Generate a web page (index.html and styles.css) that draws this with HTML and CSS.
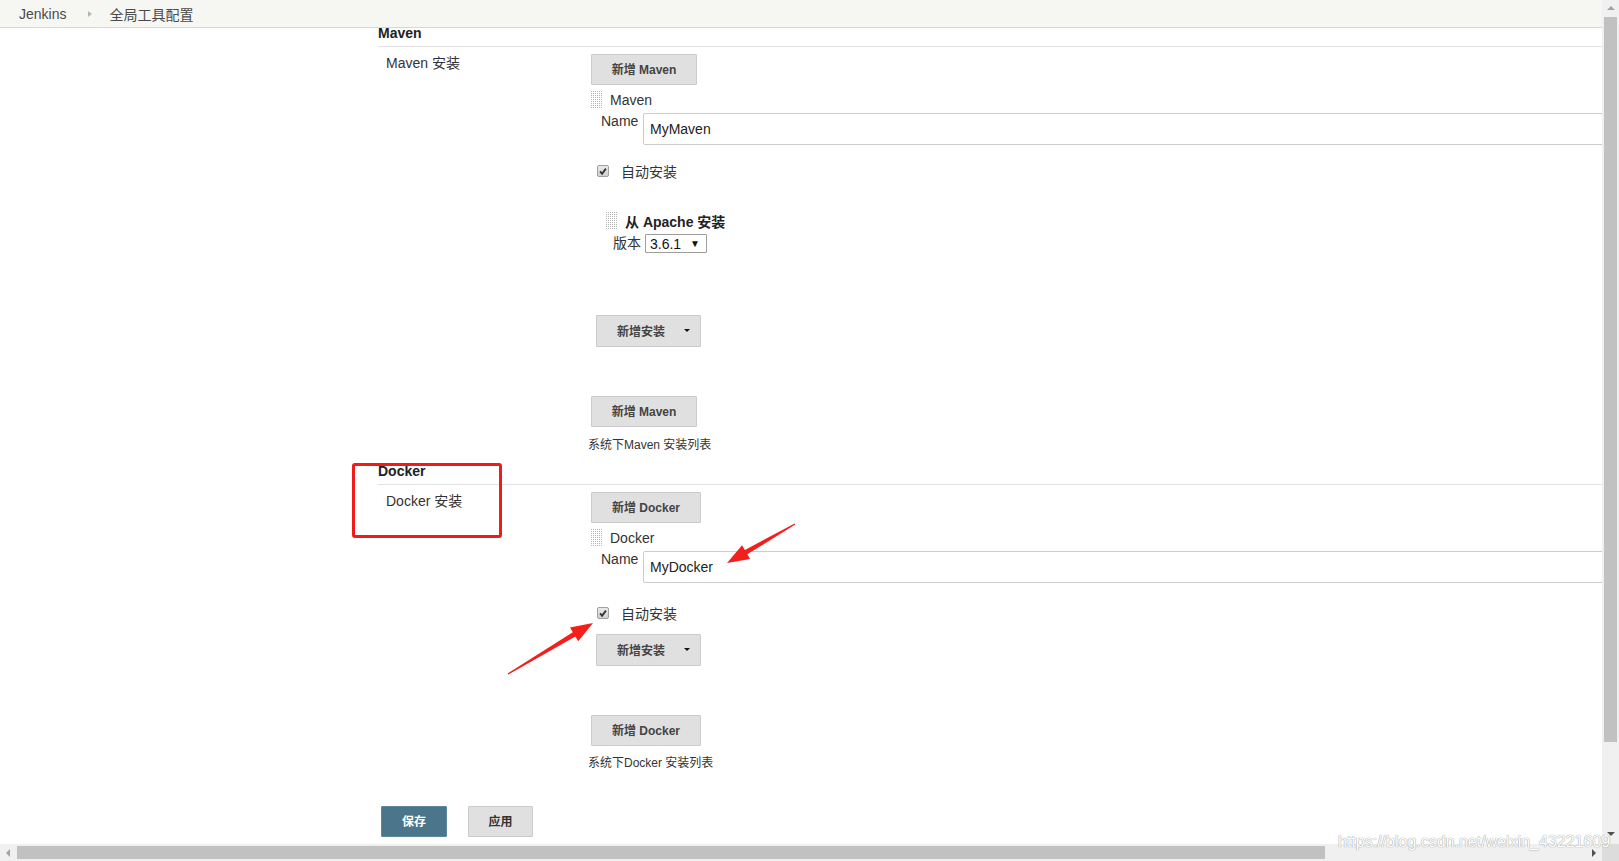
FILE: index.html
```html
<!DOCTYPE html>
<html lang="zh-CN">
<head>
    <meta charset="UTF-8">
    <title>全局工具配置 [Jenkins]</title>
    <link rel="stylesheet" href="styles.css">
</head>
<body>
    <div class="breadcrumb">
        <span class="crumb">Jenkins</span>
        <span class="crumb-sep"></span>
        <span class="crumb">全局工具配置</span>
    </div>

    <div class="main">
        <!-- Maven -->
        <div class="section">
            <div class="section-title">Maven</div>
            <div class="tool-row">
                <div class="tool-label">Maven 安装</div>
                <div class="tool-body">
                    <button class="btn btn-add">新增 Maven</button>
                    <div class="repeat-head"><span class="handle"></span><span>Maven</span></div>
                    <div class="field">
                        <label class="field-label">Name</label>
                        <input class="text-input" type="text" value="MyMaven">
                    </div>
                    <div class="check-row check-maven">
                        <span class="checkbox">
                            <svg width="11" height="11" viewBox="0 0 11 11"><path d="M2.3 5.3 L4.5 8 L8.7 2.3" fill="none" stroke="#333" stroke-width="2"/></svg>
                        </span>
                        <span>自动安装</span>
                    </div>
                    <div class="installer">
                        <div class="installer-head"><span class="handle"></span><b>从 Apache 安装</b></div>
                        <div class="version-row">
                            <span class="version-label">版本</span>
                            <div class="select">3.6.1<span class="select-caret">▼</span></div>
                        </div>
                    </div>
                    <button class="btn btn-menu btn-menu-maven">新增安装<span class="menu-caret"></span></button>
                    <button class="btn btn-add btn-add-bottom">新增 Maven</button>
                    <div class="note">系统下Maven 安装列表</div>
                </div>
            </div>
        </div>

        <!-- Docker -->
        <div class="section section-docker">
            <div class="section-title">Docker</div>
            <div class="tool-row">
                <div class="tool-label">Docker 安装</div>
                <div class="tool-body">
                    <button class="btn btn-add btn-docker">新增 Docker</button>
                    <div class="repeat-head"><span class="handle"></span><span>Docker</span></div>
                    <div class="field">
                        <label class="field-label">Name</label>
                        <input class="text-input" type="text" value="MyDocker">
                    </div>
                    <div class="check-row check-docker">
                        <span class="checkbox">
                            <svg width="11" height="11" viewBox="0 0 11 11"><path d="M2.3 5.3 L4.5 8 L8.7 2.3" fill="none" stroke="#333" stroke-width="2"/></svg>
                        </span>
                        <span>自动安装</span>
                    </div>
                    <button class="btn btn-menu btn-menu-docker">新增安装<span class="menu-caret"></span></button>
                    <button class="btn btn-add btn-docker btn-add-bottom">新增 Docker</button>
                    <div class="note note-docker">系统下Docker 安装列表</div>
                </div>
            </div>
        </div>

        <div class="form-actions">
            <button class="btn btn-save">保存</button>
            <button class="btn btn-apply">应用</button>
        </div>
    </div>

    <!-- annotations drawn over the screenshot -->
    <div class="mark-box"></div>
    <svg class="mark-arrows" width="1619" height="861" viewBox="0 0 1619 861">
        <polygon fill="#f41e1a" points="795.3,524.6 747.3,554.3 750.1,559.0 727,563 742.1,545.2 744.9,549.9 794.7,523.4"/>
        <polygon fill="#f41e1a" points="508.4,674.6 575.4,636.4 578.2,641.2 593,623 570.0,627.4 572.8,632.2 507.6,673.4"/>
    </svg>
    <div class="watermark">https://blog.csdn.net/weixin_43221609</div>

    <!-- window scrollbars -->
    <div class="vscroll">
        <span class="arrow-up"></span>
        <div class="vthumb"></div>
        <span class="arrow-down"></span>
    </div>
    <div class="hscroll">
        <span class="arrow-left"></span>
        <div class="hthumb"></div>
        <span class="arrow-right"></span>
    </div>
    <div class="scroll-corner"></div>
</body>
</html>
```

FILE: styles.css
```css
body {
    margin: 0;
    width: 1619px;
    height: 861px;
    overflow: hidden;
    position: relative;
    font-family: "Liberation Sans", Arial, "Noto Sans CJK SC", sans-serif;
    font-size: 14px;
    color: #333;
    background: #fff;
}
.breadcrumb {
    height: 27px;
    display: flex;
    align-items: center;
    padding-left: 19px;
    background-color: #f6f7f2;
    border-bottom: 1px solid #d6d8d2;
    color: #4a4a4a;
}
.crumb-sep {
    width: 0;
    height: 0;
    margin: 0 17px 0 22px;
    border-top: 3px solid transparent;
    border-bottom: 3px solid transparent;
    border-left: 4px solid #b5b5b5;
}
.main {
    padding-left: 378px;
}
.section-title {
    height: 18px;
    line-height: 10px;
    font-weight: bold;
    color: #222;
    border-bottom: 1px solid #e2e2e2;
}
.section-docker {
    margin-top: 14px;
}
.tool-row {
    display: grid;
    grid-template-columns: 213px 1fr;
}
.tool-label {
    padding: 8px 0 0 8px;
    line-height: 16px;
}
.tool-body {
    display: flex;
    flex-direction: column;
    align-items: flex-start;
}
.btn {
    box-sizing: border-box;
    height: 31px;
    padding: 0 0 2px;
    font-family: inherit;
    font-size: 12px;
    font-weight: bold;
    color: #444;
    background-color: #e0e0e0;
    border: 1px solid #cbcbcb;
    border-radius: 1px;
}
.btn-add {
    width: 106px;
    margin-top: 7px;
}
.btn-docker {
    width: 110px;
}
.btn-add-bottom {
    margin-top: 49px;
}
.repeat-head {
    display: flex;
    align-items: center;
    height: 17px;
    margin-top: 6px;
    gap: 7px;
}
.handle {
    display: inline-block;
    width: 12px;
    height: 17px;
    background:
        linear-gradient(90deg, transparent 1px, #fff 1px) 0 0 / 2px 2px,
        linear-gradient(#b4b4b4 1px, #fff 1px) 0 0 / 2px 2px;
}
.field {
    display: flex;
    align-self: stretch;
    margin-top: 5px;
    padding-left: 10px;
}
.field-label {
    width: 42px;
    line-height: 16px;
}
.text-input {
    flex: 1;
    box-sizing: border-box;
    height: 32px;
    margin: 0;
    padding: 0 6px;
    font-family: inherit;
    font-size: 14px;
    color: #222;
    border: 1px solid #ccc;
    border-radius: 2px;
}
.check-row {
    display: flex;
    align-items: flex-start;
    padding-left: 6px;
    line-height: 14px;
}
.check-maven {
    margin-top: 20px;
}
.check-docker {
    margin-top: 24px;
}
.checkbox {
    box-sizing: border-box;
    width: 12px;
    height: 12px;
    margin-right: 12px;
    display: flex;
    border: 1px solid #a0a0a0;
    border-radius: 2px;
    background: linear-gradient(#eaeaea, #d0d0d0);
}
.installer {
    margin: 33px 0 0 15px;
}
.installer-head {
    display: flex;
    align-items: center;
    gap: 7px;
    height: 17px;
    color: #222;
}
.version-row {
    display: flex;
    align-items: center;
    margin-top: 5px;
    padding-left: 7px;
}
.version-label {
    width: 32px;
    line-height: 19px;
}
.select {
    box-sizing: border-box;
    width: 62px;
    height: 19px;
    padding-left: 4px;
    display: flex;
    align-items: center;
    justify-content: space-between;
    border: 1px solid #9d9d9d;
    border-radius: 1px;
    color: #111;
}
.select-caret {
    font-size: 10px;
    margin-right: 6px;
}
.btn-menu {
    width: 105px;
    height: 32px;
    margin-left: 5px;
    padding-left: 20px;
    display: flex;
    align-items: center;
}
.btn-menu-maven {
    margin-top: 62px;
}
.btn-menu-docker {
    margin-top: 13px;
}
.menu-caret {
    width: 0;
    height: 0;
    margin-left: 19px;
    border-left: 3px solid transparent;
    border-right: 3px solid transparent;
    border-top: 3px solid #111;
}
.note {
    margin: 11px 0 0 -3px;
    font-size: 12px;
    line-height: 14px;
}
.note-docker {
    margin-top: 10px;
}
.form-actions {
    display: flex;
    gap: 21px;
    margin: 36px 0 0 3px;
}
.btn-save {
    width: 66px;
    color: #fff;
    background-color: #4b758b;
    border-color: #5b87a0;
}
.btn-apply {
    width: 65px;
    color: #333;
}
.mark-box {
    position: absolute;
    left: 352px;
    top: 463px;
    width: 144px;
    height: 69px;
    border: 3px solid #f11c19;
    border-radius: 3px;
}
.mark-arrows {
    position: absolute;
    left: 0;
    top: 0;
}
.watermark {
    position: absolute;
    left: 1338px;
    top: 832px;
    font-size: 16px;
    line-height: 20px;
    color: #fff;
    text-shadow: 0 0 1px #9a9a9a, 0 0 1px #9a9a9a;
    z-index: 2;
}
.vscroll {
    position: absolute;
    left: 1602px;
    top: 0;
    width: 17px;
    height: 844px;
    background-color: #f0f0f0;
}
.vthumb {
    position: absolute;
    left: 2px;
    top: 17px;
    width: 13px;
    height: 725px;
    background-color: #c1c1c1;
}
.arrow-up,
.arrow-down {
    position: absolute;
    left: 5px;
    width: 0;
    height: 0;
    border-left: 4px solid transparent;
    border-right: 4px solid transparent;
}
.arrow-up {
    top: 6px;
    border-bottom: 4px solid #a3a3a3;
}
.arrow-down {
    top: 832px;
    border-top: 4px solid #505050;
}
.hscroll {
    position: absolute;
    left: 0;
    top: 844px;
    width: 1602px;
    height: 17px;
    background-color: #f0f0f0;
}
.hthumb {
    position: absolute;
    left: 17px;
    top: 2px;
    width: 1308px;
    height: 13px;
    background-color: #c1c1c1;
}
.arrow-left,
.arrow-right {
    position: absolute;
    top: 5px;
    width: 0;
    height: 0;
    border-top: 4px solid transparent;
    border-bottom: 4px solid transparent;
}
.arrow-left {
    left: 6px;
    border-right: 4px solid #a3a3a3;
}
.arrow-right {
    left: 1592px;
    border-left: 4px solid #505050;
}
.scroll-corner {
    position: absolute;
    left: 1602px;
    top: 844px;
    width: 17px;
    height: 17px;
    background-color: #dcdcdc;
}
```
